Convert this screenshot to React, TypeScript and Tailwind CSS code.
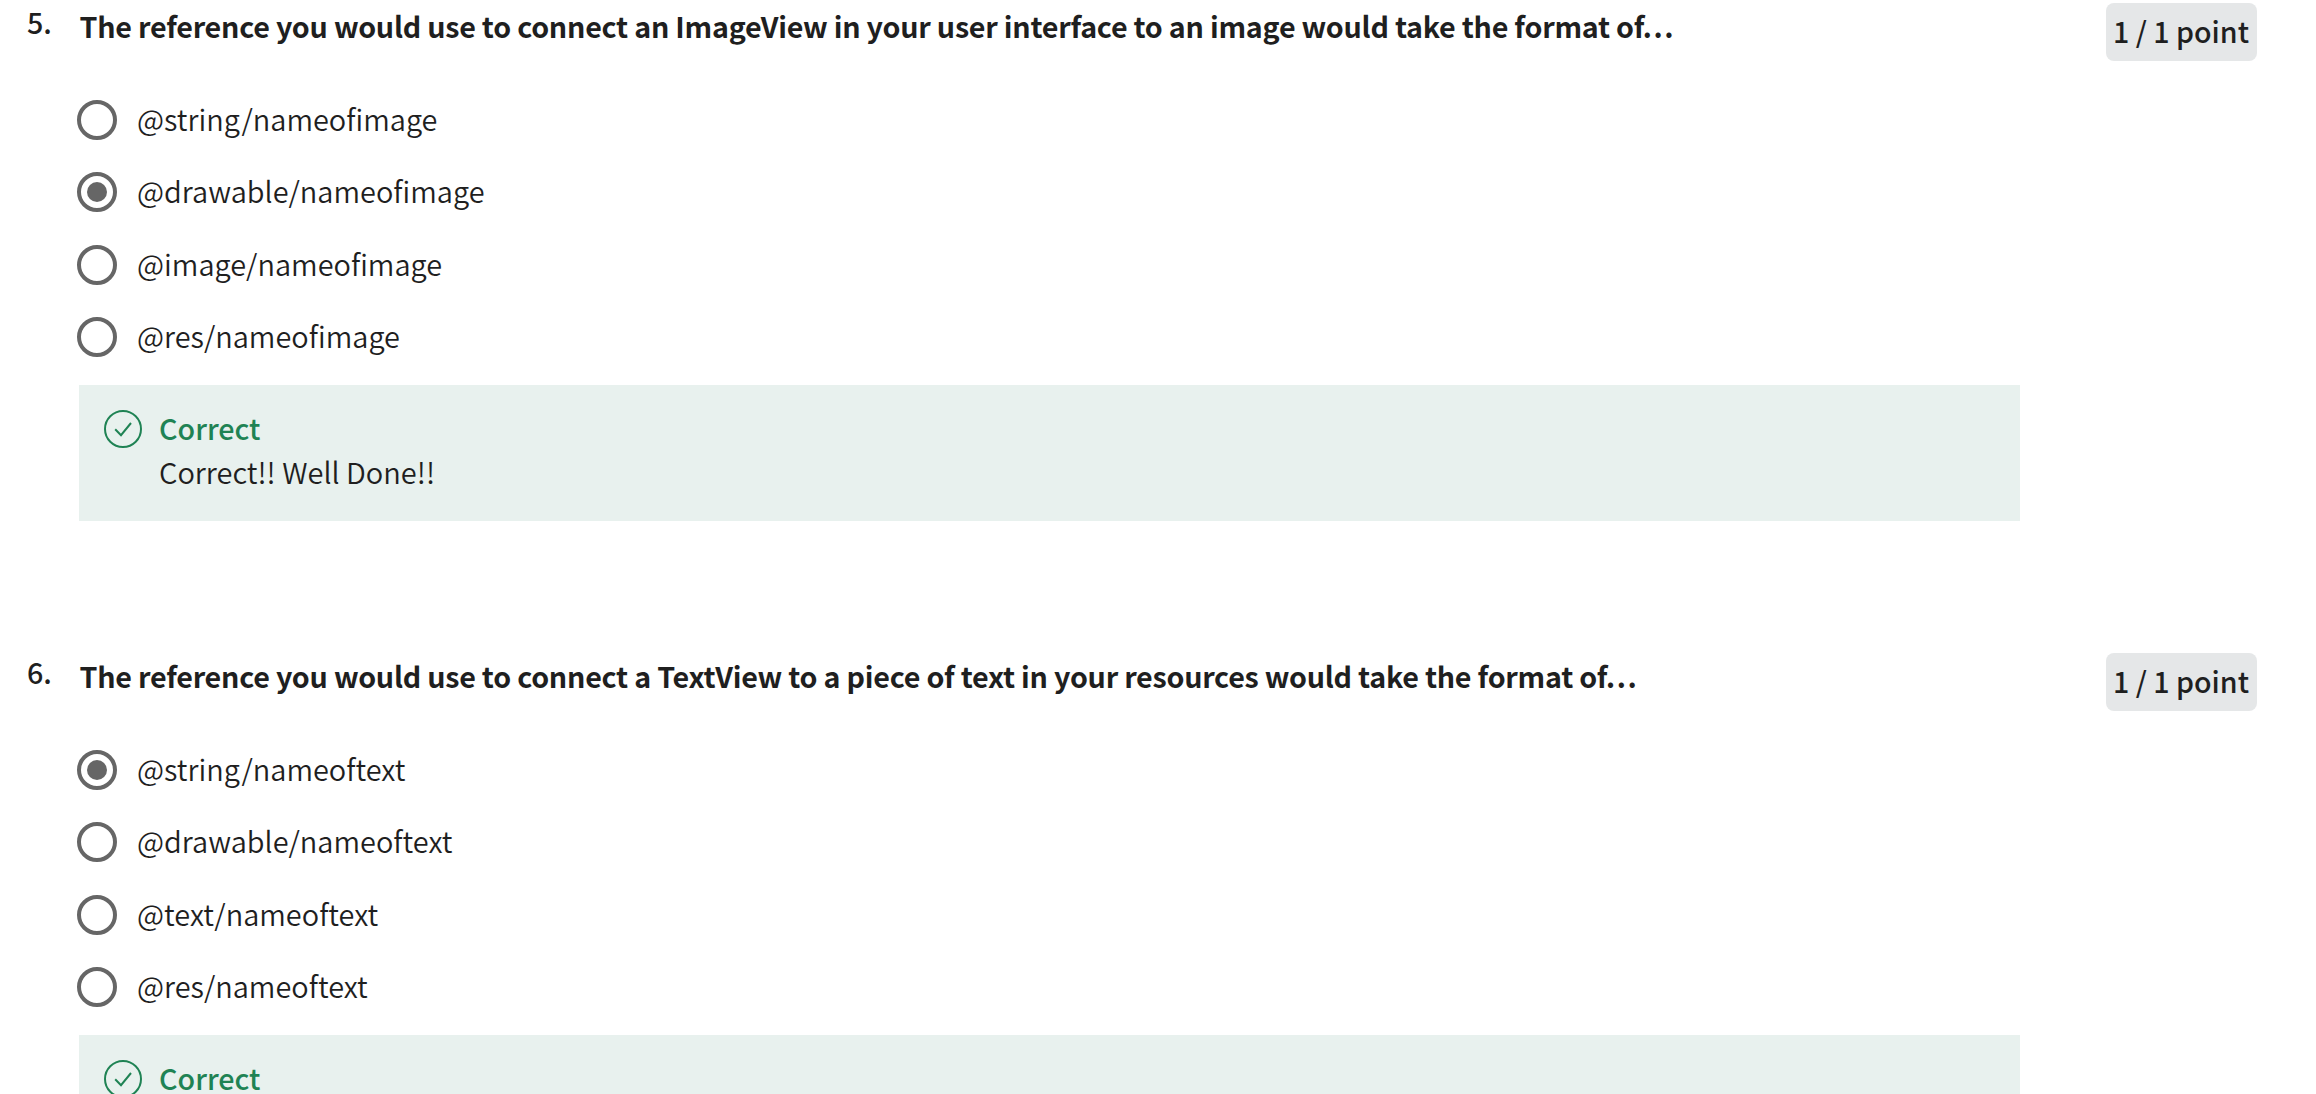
type Question = {
  number: number;
  prompt: string;
  options: string[];
  selected: number;
  feedback: string;
};

const questions: Question[] = [
  {
    number: 5,
    prompt:
      'The reference you would use to connect an ImageView in your user interface to an image would take the format of…',
    options: ['@string/nameofimage', '@drawable/nameofimage', '@image/nameofimage', '@res/nameofimage'],
    selected: 1,
    feedback: 'Correct!! Well Done!!',
  },
  {
    number: 6,
    prompt:
      'The reference you would use to connect a TextView to a piece of text in your resources would take the format of…',
    options: ['@string/nameoftext', '@drawable/nameoftext', '@text/nameoftext', '@res/nameoftext'],
    selected: 0,
    feedback: 'Correct!! Well Done!!',
  },
];

function Radio({ checked }: { checked: boolean }) {
  return (
    <span className="flex size-10 shrink-0 items-center justify-center rounded-full border-4 border-[#666666]">
      {checked && <span className="size-5 rounded-full bg-[#666666]" />}
    </span>
  );
}

function CheckCircle() {
  return (
    <svg className="mt-[25px] size-[38px] shrink-0" viewBox="0 0 38 38" fill="none" stroke="#1f8354" strokeWidth="2">
      <circle cx="19" cy="19" r="18" />
      <path d="M11.2 19.2 L17 25.2 L27 13" />
    </svg>
  );
}

function QuestionBlock({ question }: { question: Question }) {
  return (
    <section className="flex h-[650px] items-start pt-[3px]">
      <div className="mt-px w-[79px] shrink-0 pl-[27px] leading-9 font-medium">{question.number}.</div>
      <div className="w-[1941px] shrink-0">
        <h2 className="mt-[5px] pl-[0.5px] leading-9 font-bold tracking-[-0.245px] whitespace-nowrap">
          {question.prompt}
        </h2>
        <div className="-ml-0.5 mt-[55.75px] flex flex-col gap-[32.5px]">
          {question.options.map((option, i) => (
            <label key={option} className="flex h-10 items-center">
              <Radio checked={i === question.selected} />
              <span className="ml-5 pb-[3.6px] text-[28.92px] leading-9 font-[350]">{option}</span>
            </label>
          ))}
        </div>
        <div className="mt-[27.75px] flex h-[136px] bg-[#e8f1ee] pl-[25px]">
          <CheckCircle />
          <div className="ml-[17px] pt-[21px] leading-11">
            <p className="font-medium text-[#1f8354]">Correct</p>
            <p className="-mt-px text-[29px] font-[350]">{question.feedback}</p>
          </div>
        </div>
      </div>
      <div className="ml-[86px] flex h-[58px] w-[151px] items-center justify-center rounded-lg bg-[#e5e7e8] pr-px pb-[2px] text-[28.6px] font-medium whitespace-nowrap">
        1 / 1 point
      </div>
    </section>
  );
}

export default function App() {
  return (
    <main className="h-[1094px] w-full overflow-hidden bg-white font-['Noto_Sans_CJK_SC',sans-serif] text-[28.7px] text-[#1f1f1f]">
      {questions.map((q) => (
        <QuestionBlock key={q.number} question={q} />
      ))}
    </main>
  );
}
